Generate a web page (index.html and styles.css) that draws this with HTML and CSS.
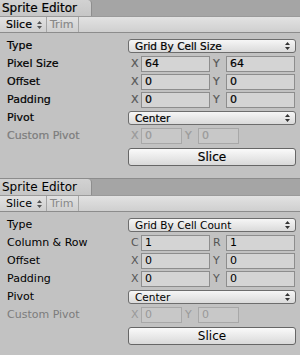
FILE: index.html
```html
<!DOCTYPE html>
<html>
<head>
<meta charset="utf-8">
<link rel="stylesheet" href="styles.css">
</head>
<body>
<div class="panel strong">
  <div class="tabbar"><div class="tab">Sprite Editor</div></div>
  <div class="toolbar">
    <div class="tbtn first">Slice <svg class="arr" width="5" height="8" viewBox="0 0 5 8"><path d="M2.5 0L5 3H0Z M2.5 8L0 5H5Z" fill="#555"/></svg></div>
    <div class="tbtn dis">Trim</div>
  </div>
  <div class="content">
    <div class="row"><span class="label">Type</span><div class="drop">Grid By Cell Size<svg class="arr" width="5" height="8" viewBox="0 0 5 8"><path d="M2.5 0L5 3H0Z M2.5 8L0 5H5Z" fill="#333"/></svg></div></div>
    <div class="row"><span class="label">Pixel Size</span><div class="pair"><span class="axis">X</span><span class="field">64</span><span class="axis">Y</span><span class="field">64</span></div></div>
    <div class="row"><span class="label">Offset</span><div class="pair"><span class="axis">X</span><span class="field">0</span><span class="axis">Y</span><span class="field">0</span></div></div>
    <div class="row"><span class="label">Padding</span><div class="pair"><span class="axis">X</span><span class="field">0</span><span class="axis">Y</span><span class="field">0</span></div></div>
    <div class="row"><span class="label">Pivot</span><div class="drop">Center<svg class="arr" width="5" height="8" viewBox="0 0 5 8"><path d="M2.5 0L5 3H0Z M2.5 8L0 5H5Z" fill="#333"/></svg></div></div>
    <div class="row dis"><span class="label">Custom Pivot</span><div class="pair small"><span class="axis">X</span><span class="field">0</span><span class="axis">Y</span><span class="field">0</span></div></div>
    <div class="btnrow"><div class="btn">Slice</div></div>
  </div>
</div>
<div class="panel">
  <div class="tabbar"><div class="tab">Sprite Editor</div></div>
  <div class="toolbar">
    <div class="tbtn first">Slice <svg class="arr" width="5" height="8" viewBox="0 0 5 8"><path d="M2.5 0L5 3H0Z M2.5 8L0 5H5Z" fill="#555"/></svg></div>
    <div class="tbtn dis">Trim</div>
  </div>
  <div class="content">
    <div class="row"><span class="label">Type</span><div class="drop">Grid By Cell Count<svg class="arr" width="5" height="8" viewBox="0 0 5 8"><path d="M2.5 0L5 3H0Z M2.5 8L0 5H5Z" fill="#333"/></svg></div></div>
    <div class="row"><span class="label">Column &amp; Row</span><div class="pair"><span class="axis">C</span><span class="field">1</span><span class="axis">R</span><span class="field">1</span></div></div>
    <div class="row"><span class="label">Offset</span><div class="pair"><span class="axis">X</span><span class="field">0</span><span class="axis">Y</span><span class="field">0</span></div></div>
    <div class="row"><span class="label">Padding</span><div class="pair"><span class="axis">X</span><span class="field">0</span><span class="axis">Y</span><span class="field">0</span></div></div>
    <div class="row"><span class="label">Pivot</span><div class="drop">Center<svg class="arr" width="5" height="8" viewBox="0 0 5 8"><path d="M2.5 0L5 3H0Z M2.5 8L0 5H5Z" fill="#333"/></svg></div></div>
    <div class="row dis"><span class="label">Custom Pivot</span><div class="pair small"><span class="axis">X</span><span class="field">0</span><span class="axis">Y</span><span class="field">0</span></div></div>
    <div class="btnrow"><div class="btn">Slice</div></div>
  </div>
</div>
</body>
</html>
```
FILE: styles.css
```css
* { box-sizing: border-box; }
body {
  margin: 0;
  width: 300px;
  height: 355px;
  background: #c2c2c2;
  font-family: "DejaVu Sans", sans-serif;
  font-size: 11px;
  color: #000;
  overflow: hidden;
}
.panel {
  height: 179px;
  display: flex;
  flex-direction: column;
  border-bottom: 1px solid #8c8c8c;
  background: #c2c2c2;
}
.strong { -webkit-text-stroke: 0.2px currentColor; }
.tabbar {
  height: 16px;
  background: #a5a5a5;
  display: flex;
  align-items: flex-end;
}
.tab {
  width: 92px;
  height: 16px;
  background: linear-gradient(#d2d2d2, #c6c6c6);
  border-right: 1px solid #8e8e8e;
  border-radius: 0 4px 0 0;
  padding-left: 2px;
  line-height: 16px;
  font-size: 12px;
}
.toolbar {
  height: 17px;
  background: linear-gradient(#e2e2e2, #cfcfcf);
  border-top: 1px solid #9a9a9a;
  border-bottom: 1px solid #8c8c8c;
  display: flex;
  padding-left: 3px;
}
.tbtn {
  height: 15px;
  line-height: 15px;
  border-right: 1px solid #a6a6a6;
  display: flex;
  align-items: center;
  gap: 5px;
  white-space: nowrap;
  flex: none;
}
.tbtn.first { width: 44px; padding-left: 3px; }
.tbtn.dis { width: 32px; color: #888; padding-left: 3px; }
.content {
  flex: 1;
  padding: 4px 4px 0 7px;
}
.row {
  height: 18px;
  display: flex;
  align-items: center;
  justify-content: space-between;
}
.label { line-height: 18px; }
.row.dis .label { color: #7c7c7c; }
.drop {
  width: 168px;
  height: 14px;
  border: 1px solid #6d6d6d;
  border-radius: 3px;
  background: linear-gradient(#f6f6f6, #dadada);
  display: flex;
  align-items: center;
  justify-content: space-between;
  padding: 0 5px 0 6px;
  font-size: 10.5px;
}
.pair {
  width: 168px;
  display: grid;
  grid-template-columns: 13px 69px 16px 69px;
  align-items: center;
}
.pair.small { grid-template-columns: 13px 41px 16px 41px; }
.axis { color: #555; padding-left: 3px; line-height: 16px; }
.field {
  height: 16px;
  line-height: 14px;
  border: 1px solid #8d8d8d;
  background: #d4d4d4;
  padding-left: 3px;
}
.row.dis .axis { color: #999; }
.row.dis .field { color: #999; border-color: #a8a8a8; background: #c8c8c8; }
.btnrow {
  display: flex;
  justify-content: flex-end;
  margin-top: 3px;
}
.btn {
  width: 168px;
  height: 18px;
  border: 1px solid #666;
  border-radius: 3px;
  background: linear-gradient(#fafafa, #d9d9d9);
  text-align: center;
  line-height: 16px;
  font-size: 12px;
}
```
